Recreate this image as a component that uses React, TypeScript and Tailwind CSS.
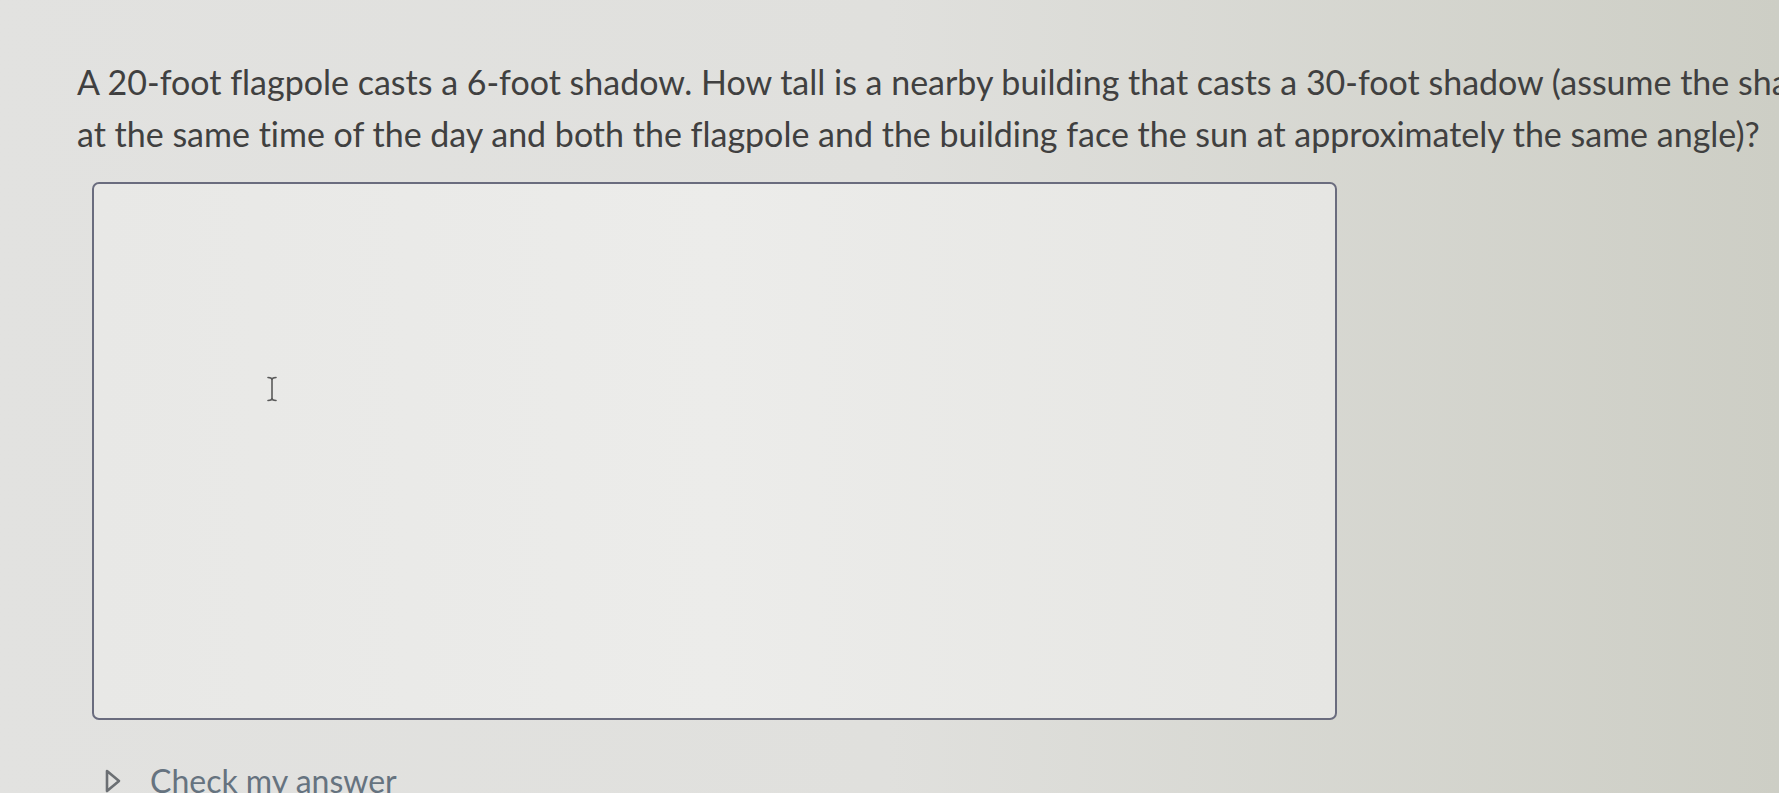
import React from "react";

const lato = { fontFamily: "Lato, 'Open Sans', sans-serif" };

function IBeam() {
  return (
    <svg width="12" height="26" viewBox="0 0 12 26" fill="none" stroke="#5a5a5a" strokeWidth="1.6" strokeLinecap="round">
      <path d="M2 1.5c2 0 4 .8 4 2.5c0-1.7 2-2.5 4-2.5" />
      <path d="M6 4v18" />
      <path d="M2 24.5c2 0 4-.8 4-2.5c0 1.7 2 2.5 4 2.5" />
    </svg>
  );
}

function Disclosure() {
  return (
    <svg width="18" height="26" viewBox="0 0 18 26" fill="none" stroke="#6b6f73" strokeWidth="2.6" strokeLinejoin="round">
      <path d="M3 3 L15 13 L3 23 Z" />
    </svg>
  );
}

export default function App() {
  return (
    <div
      className="w-[1779px] h-[793px] overflow-hidden bg-gradient-to-r from-[#e2e2e0] via-[#e0e0dd] to-[#cdcec5] [font-variant-ligatures:none]"
      style={lato}
    >
      <div className="pl-[77px] pt-[56px]">
        <div className="text-[34px] leading-[52px] text-[#404040]">
          <p className="whitespace-nowrap">
            A 20-foot flagpole casts a 6-foot shadow. How tall is a nearby building that casts a 30-foot shadow (assume the sha
          </p>
          <p className="whitespace-nowrap">
            at the same time of the day and both the flagpole and the building face the sun at approximately the same angle)?
          </p>
        </div>

        <div className="relative ml-[15px] mt-[22px] w-[1245px] h-[538px] rounded-[7px] border-2 border-[#6a6c7e] bg-gradient-to-r from-[#e8e8e6] via-[#ececea] to-[#e6e6e3]">
          <div className="absolute left-[172px] top-[192px]">
            <IBeam />
          </div>
        </div>

        <div className="mt-[42px] ml-[27px] flex items-center gap-[28px]">
          <Disclosure />
          <span className="text-[32px] leading-[38px] text-[#66737f]">Check my answer</span>
        </div>
      </div>
    </div>
  );
}
